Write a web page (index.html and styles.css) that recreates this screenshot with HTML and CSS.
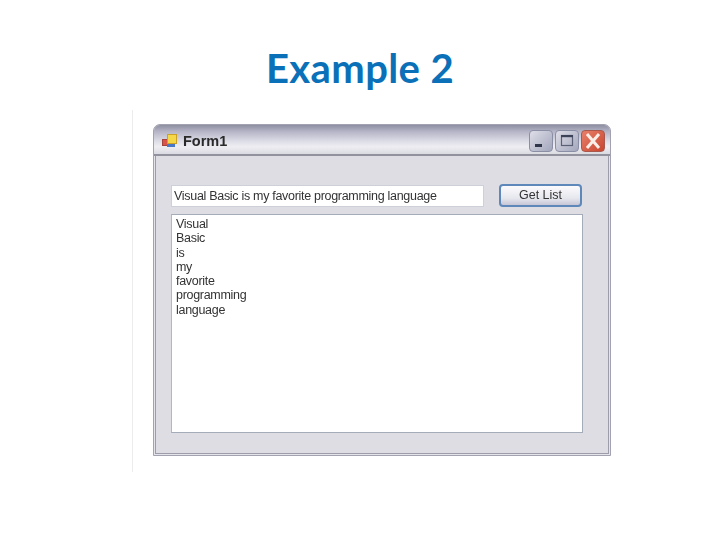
FILE: index.html
```html
<!DOCTYPE html>
<html>
<head>
<meta charset="utf-8">
<title>Example 2</title>
<link rel="stylesheet" href="styles.css">
</head>
<body>
<div class="slide">
	<h1 class="slide_title">Example 2</h1>
	<div class="shot">
		<div class="form_win">
			<div class="form_bar">
				<svg class="form_icon" width="16" height="16" viewBox="0 0 16 16">
					<rect x="1.5" y="6.5" width="6" height="6" fill="#d9534a" stroke="#a5423c" stroke-width="1"/>
					<rect x="6" y="11" width="8" height="3" fill="#4a78c8"/>
					<rect x="6.5" y="1.5" width="9" height="9" fill="#f5d84a" stroke="#c9a227" stroke-width="1"/>
				</svg>
				<span class="form_name">Form1</span>
				<div class="form_btns">
					<div class="win_btn">
						<svg width="22" height="20" viewBox="0 0 22 20"><rect x="5" y="13" width="7" height="3" fill="#30364a"/></svg>
					</div>
					<div class="win_btn">
						<svg width="22" height="20" viewBox="0 0 22 20"><rect x="5.5" y="4.5" width="11" height="10" fill="none" stroke="#5a6076" stroke-width="1.2"/><rect x="5" y="4" width="12" height="2.2" fill="#3c4258"/></svg>
					</div>
					<div class="win_btn win_close">
						<svg width="22" height="20" viewBox="0 0 22 20"><path d="M5 3 L17 17 M17 3 L5 17" stroke="#fbeee8" stroke-width="3" fill="none"/></svg>
					</div>
				</div>
			</div>
			<div class="form_body">
				<div class="input_row">
					<div class="text_box">Visual Basic is my favorite programming language</div>
					<div class="get_btn">Get List</div>
				</div>
				<ul class="list_box">
					<li>Visual</li>
					<li>Basic</li>
					<li>is</li>
					<li>my</li>
					<li>favorite</li>
					<li>programming</li>
					<li>language</li>
				</ul>
			</div>
		</div>
	</div>
</div>
</body>
</html>
```

FILE: styles.css
```css
html,body,ul,li,h1{ margin:0; padding:0; list-style:none;}
body{ background:#fff; font-family:"Liberation Sans",Arial,sans-serif;}
.slide{ width:720px; height:540px; overflow:hidden;}
.slide_title{ height:110px; padding-top:44px; box-sizing:border-box; text-align:center; font-family:"Lato",sans-serif; font-size:40px; line-height:48px; font-weight:700; letter-spacing:0.4px; color:#0a70b8;}
.shot{ width:479px; height:362px; margin-left:132px; padding:14px 0 0 20px; box-sizing:border-box; border-left:1px solid #ececec;}
.form_win{ width:458px; height:332px; box-sizing:border-box; border:1px solid #a2a2b0; border-radius:7px 7px 0 0; box-shadow:inset 0 0 0 1px #e4e4ea, inset 0 0 0 2px #9c9caa; background:#dddde3; filter:blur(0.5px);}
.form_bar{ height:27px; display:flex; align-items:center; padding:2px 5px 0 7px; border-bottom:2px solid #92929e; border-radius:6px 6px 0 0; background:linear-gradient(#8f8fa3 0,#b4b4c6 22%,#dcdce6 55%,#eeeef2 75%,#dadae2 100%);}
.form_icon{ flex:none;}
.form_name{ margin-left:6px; font-size:14.5px; font-weight:700; color:#2a2a2a;}
.form_btns{ margin-left:auto; display:flex; gap:2px;}
.win_btn{ width:24px; height:22px; box-sizing:border-box; border:1px solid #8b8fa6; border-radius:4px; background:linear-gradient(135deg,#dedee8,#a3a7bc); display:flex; align-items:center; justify-content:center;}
.win_close{ border-color:#a8584c; background:linear-gradient(135deg,#e8806a,#c8452f);}
.form_body{ padding:28px 0 0 17px;}
.input_row{ display:flex; align-items:center;}
.text_box{ width:313px; height:22px; box-sizing:border-box; padding-left:2px; border:1px solid #cdd0d8; background:#fff; font-size:12.5px; line-height:20px; letter-spacing:-0.3px; color:#333; white-space:nowrap; overflow:hidden;}
.get_btn{ width:83px; height:23px; margin-left:15px; box-sizing:border-box; border:2px solid #5f88ba; border-radius:4px; background:linear-gradient(#fbfbfd,#e6e6ee 65%,#c6c6d6); font-size:12.5px; line-height:19px; text-align:center; color:#333;}
.list_box{ width:412px; height:219px; margin-top:7px; box-sizing:border-box; padding:2px 0 0 4px; border:1px solid #a4acba; border-left-color:#a8bcc8; background:#fff; font-size:12.5px; line-height:14.3px; letter-spacing:-0.3px; color:#333;}
```
